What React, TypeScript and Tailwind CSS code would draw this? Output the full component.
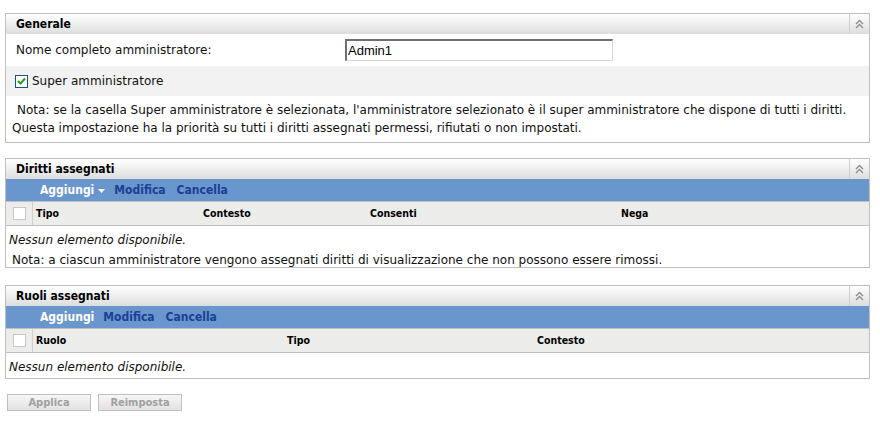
import React from "react";

const cond = { fontFamily: '"DejaVu Sans Condensed", "DejaVu Sans", sans-serif' };
const body = { fontFamily: '"DejaVu Sans", Verdana, sans-serif' };

function Collapse() {
  return (
    <div className="flex w-[20px] self-stretch items-center justify-center border-l border-[#d0d0d0]">
      <svg width="9" height="10" viewBox="0 0 9 10">
        <path d="M1 5 L4.5 1.5 L8 5" fill="none" stroke="#8a8a8a" strokeWidth="1.3" />
        <path d="M1 9 L4.5 5.5 L8 9" fill="none" stroke="#8a8a8a" strokeWidth="1.3" />
      </svg>
    </div>
  );
}

function PanelHeader({ title }: { title: string }) {
  return (
    <div className="flex h-[20px] items-center bg-[linear-gradient(#ffffff,#dcdedd)]" style={cond}>
      <div className="flex-1 pl-[10px] text-[12px] font-bold text-black">{title}</div>
      <Collapse />
    </div>
  );
}

function Toolbar({ dropdown }: { dropdown: boolean }) {
  return (
    <div className="flex h-[22px] items-center bg-[#6a96ce] pl-[34px] text-[12px] font-bold" style={cond}>
      <span className="text-white">Aggiungi</span>
      {dropdown && (
        <svg width="7" height="4" viewBox="0 0 7 4" className="ml-[4px] mt-[1px]">
          <path d="M0 0 L7 0 L3.5 4 Z" fill="#ffffff" />
        </svg>
      )}
      <span className="ml-[9px] text-[#1c3f94]">Modifica</span>
      <span className="ml-[11px] text-[#1c3f94]">Cancella</span>
    </div>
  );
}

function Box() {
  return <div className="h-[13px] w-[13px] border border-[#c8c8c8] bg-white" />;
}

function ColHeader({ cols }: { cols: { label: string; w: string }[] }) {
  return (
    <div
      className="flex h-[25px] items-stretch border-y border-[#c0c0c0] bg-[#ececea] text-[10.5px] font-bold text-black"
      style={cond}
    >
      <div className="flex w-[27px] items-center justify-center border-r border-[#d0d0d0]">
        <Box />
      </div>
      {cols.map((c) => (
        <div key={c.label} className={`flex items-center pl-[3px] ${c.w}`}>
          {c.label}
        </div>
      ))}
    </div>
  );
}

export default function App() {
  return (
    <div className="w-[880px] h-[422px] bg-white text-[12px] text-[#111]" style={body}>
      <div className="pl-[5px] pt-[13px] w-[870px]">
        {/* Generale */}
        <div className="border border-[#c0c0c0]">
          <PanelHeader title="Generale" />
          <div className="flex h-[32px] items-center bg-white">
            <div className="w-[339px] pl-[10px]">Nome completo amministratore:</div>
            <input
              readOnly
              value="Admin1"
              className="h-[22px] w-[268px] border border-t-[2px] border-l-[2px] border-t-[#707070] border-l-[#707070] border-r-[#d8d8d0] border-b-[#d8d8d0] bg-white px-[1px] text-[13px] text-black outline-none"
              style={{ fontFamily: '"Liberation Sans", Arial, sans-serif' }}
            />
          </div>
          <div className="flex h-[30px] items-center bg-[#f2f2f2] pl-[9px]">
            <div className="flex h-[13px] w-[13px] items-center justify-center border border-[#1c5180] bg-white">
              <svg width="9" height="8" viewBox="0 0 9 8">
                <path d="M1 4 L3.5 6.5 L8 1.5" fill="none" stroke="#21a121" strokeWidth="2" />
              </svg>
            </div>
            <span className="ml-[4px]">Super amministratore</span>
          </div>
          <div className="px-[7px] pt-[5px] pb-[5px] leading-[18px]">
            <div className="pl-[4px]">
              Nota: se la casella Super amministratore è selezionata, l'amministratore selezionato è il super amministratore che dispone di tutti i diritti.
            </div>
            <div className="-ml-[1px]">
              Questa impostazione ha la priorità su tutti i diritti assegnati permessi, rifiutati o non impostati.
            </div>
          </div>
        </div>

        {/* Diritti assegnati */}
        <div className="mt-[15px] border border-[#c0c0c0]">
          <PanelHeader title="Diritti assegnati" />
          <Toolbar dropdown />
          <ColHeader
            cols={[
              { label: "Tipo", w: "w-[167px]" },
              { label: "Contesto", w: "w-[167px]" },
              { label: "Consenti", w: "w-[251px]" },
              { label: "Nega", w: "flex-1" },
            ]}
          />
          <div className="flex h-[24px] items-center pl-[3px] pt-[4px] italic">Nessun elemento disponibile.</div>
          <div className="flex h-[17px] items-center pl-[6px] pt-[2px]">
            Nota: a ciascun amministratore vengono assegnati diritti di visualizzazione che non possono essere rimossi.
          </div>
        </div>

        {/* Ruoli assegnati */}
        <div className="mt-[17px] border border-[#c0c0c0]">
          <PanelHeader title="Ruoli assegnati" />
          <Toolbar dropdown={false} />
          <ColHeader
            cols={[
              { label: "Ruolo", w: "w-[251px]" },
              { label: "Tipo", w: "w-[250px]" },
              { label: "Contesto", w: "flex-1" },
            ]}
          />
          <div className="flex h-[25px] items-center pl-[3px] pt-[3px] italic">Nessun elemento disponibile.</div>
        </div>

        <div className="mt-[15px] flex gap-[7px] pl-[2px]" style={cond}>
          <button className="h-[17px] w-[84px] border border-[#c0c0c0] bg-[linear-gradient(#f6f6f6,#e2e2e2)] text-[11px] font-bold text-[#a0a0a0]">
            Applica
          </button>
          <button className="h-[17px] w-[84px] border border-[#c0c0c0] bg-[linear-gradient(#f6f6f6,#e2e2e2)] text-[11px] font-bold text-[#a0a0a0]">
            Reimposta
          </button>
        </div>
      </div>
    </div>
  );
}
